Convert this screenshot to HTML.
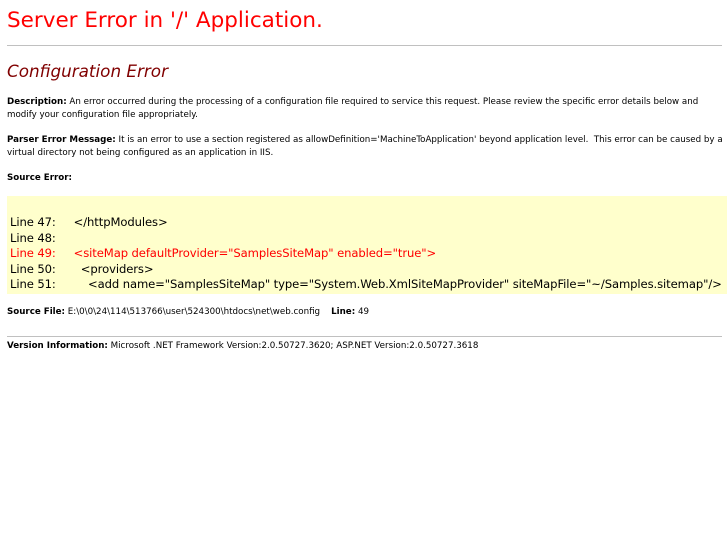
<!DOCTYPE html>
<html><head><style>
body{margin:0;background:#fff;font-family:"DejaVu Sans","Liberation Sans",sans-serif;color:#000;}
.h1{position:absolute;left:7px;top:8px;font-size:21.5px;color:#f00;white-space:nowrap;}
.hr{position:absolute;left:7px;right:5px;height:0;border-top:1px solid #c0c0c0;}
.h2{position:absolute;left:7px;top:61px;font-size:16.8px;font-style:italic;color:#800000;white-space:nowrap;}
.t{position:absolute;left:7px;font-size:8.7px;line-height:12.5px;white-space:nowrap;}
b{font-weight:bold;}
.code{position:absolute;left:7px;top:196px;width:720px;height:98px;background:#ffffcc;}
.cl{position:absolute;left:3px;font-family:"DejaVu Sans",sans-serif;font-size:11.6px;white-space:pre;line-height:15px;letter-spacing:-0.1px;}
</style></head><body>
<div class="h1">Server Error in '/' Application.</div>
<div class="hr" style="top:45px"></div>
<div class="h2">Configuration Error</div>
<div class="t" style="top:96px"><b>Description:</b> An error occurred during the processing of a configuration file required to service this request. Please review the specific error details below and<br>modify your configuration file appropriately.</div>
<div class="t" style="top:134px"><b>Parser Error Message:</b> It is an error to use a section registered as allowDefinition='MachineToApplication' beyond application level.&nbsp; This error can be caused by a<br>virtual directory not being configured as an application in IIS.</div>
<div class="t" style="top:172px"><b>Source Error:</b></div>
<div class="code">
<div class="cl" style="top:19px">Line 47:     &lt;/httpModules&gt;</div>
<div class="cl" style="top:34.5px">Line 48: </div>
<div class="cl" style="top:50px;color:#f00">Line 49:     &lt;siteMap defaultProvider="SamplesSiteMap" enabled="true"&gt;</div>
<div class="cl" style="top:65.5px">Line 50:       &lt;providers&gt;</div>
<div class="cl" style="top:81px">Line 51:         &lt;add name="SamplesSiteMap" type="System.Web.XmlSiteMapProvider" siteMapFile="~/Samples.sitemap"/&gt;</div>
</div>
<div class="t" style="top:306px"><b>Source File:</b> E:\0\0\24\114\513766\user\524300\htdocs\net\web.config &nbsp;&nbsp; <b>Line:</b> 49</div>
<div class="hr" style="top:336px"></div>
<div class="t" style="top:340px"><b>Version Information:</b> Microsoft .NET Framework Version:2.0.50727.3620; ASP.NET Version:2.0.50727.3618</div>
</body></html>
